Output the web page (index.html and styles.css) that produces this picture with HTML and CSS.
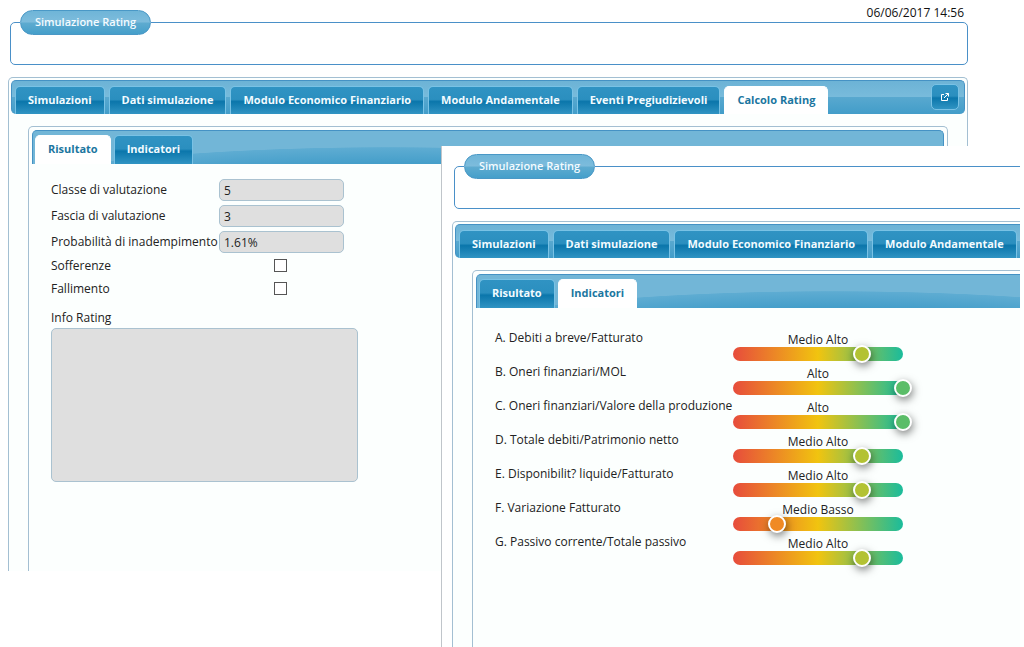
FILE: index.html
```html
<!DOCTYPE html>
<html lang="it">
<head>
<meta charset="utf-8">
<title>Simulazione Rating</title>
<link rel="stylesheet" href="styles.css">
</head>
<body>
<main class="app">
  <time class="clock" datetime="2017-06-06T14:56">06/06/2017 14:56</time>
  <fieldset class="group"><legend>Simulazione Rating</legend></fieldset>
  <section class="tabs">
    <nav class="bar">
      <button class="tab">Simulazioni</button>
      <button class="tab">Dati simulazione</button>
      <button class="tab">Modulo Economico Finanziario</button>
      <button class="tab">Modulo Andamentale</button>
      <button class="tab">Eventi Pregiudizievoli</button>
      <button class="tab active">Calcolo Rating</button>
      <button class="popout" aria-label="Apri in una nuova finestra">
        <svg width="10" height="10" viewBox="0 0 10 10" fill="none" stroke="currentColor"><path d="M4 2.500H1.500v6h6V6M5.500 1.500h3v3M8.500 1.500L4 6"/></svg>
      </button>
    </nav>
    <section class="tabs inner">
      <nav class="bar wave">
        <button class="tab active">Risultato</button>
        <button class="tab">Indicatori</button>
      </nav>
      <form class="result">
        <div class="fields">
          <label for="classe">Classe di valutazione</label><input id="classe" type="text" value="5" readonly>
          <label for="fascia">Fascia di valutazione</label><input id="fascia" type="text" value="3" readonly>
          <label for="prob">Probabilità di inadempimento</label><input id="prob" type="text" value="1.61%" readonly>
        </div>
        <div class="fields checks">
          <label for="soff">Sofferenze</label><input id="soff" type="checkbox">
          <label for="fall">Fallimento</label><input id="fall" type="checkbox">
        </div>
        <label class="info-label" for="info">Info Rating</label>
        <textarea id="info" readonly></textarea>
      </form>
    </section>
  </section>
</main>

<aside class="window">
  <div class="app">
    <fieldset class="group"><legend>Simulazione Rating</legend></fieldset>
    <section class="tabs">
      <nav class="bar">
        <button class="tab">Simulazioni</button>
        <button class="tab">Dati simulazione</button>
        <button class="tab">Modulo Economico Finanziario</button>
        <button class="tab">Modulo Andamentale</button>
        <button class="tab" aria-label="Scheda successiva"></button>
      </nav>
      <section class="tabs inner">
        <nav class="bar wave">
          <button class="tab">Risultato</button>
          <button class="tab active">Indicatori</button>
        </nav>
        <div class="gauges">
          <div class="gauge"><label for="g1">A. Debiti a breve/Fatturato</label><div class="meter"><output for="g1">Medio Alto</output><div class="track"><input id="g1" class="mid-high" type="range" value="76"></div></div></div>
          <div class="gauge"><label for="g2">B. Oneri finanziari/MOL</label><div class="meter"><output for="g2">Alto</output><div class="track"><input id="g2" class="high" type="range" value="100"></div></div></div>
          <div class="gauge"><label for="g3">C. Oneri finanziari/Valore della produzione</label><div class="meter"><output for="g3">Alto</output><div class="track"><input id="g3" class="high" type="range" value="100"></div></div></div>
          <div class="gauge"><label for="g4">D. Totale debiti/Patrimonio netto</label><div class="meter"><output for="g4">Medio Alto</output><div class="track"><input id="g4" class="mid-high" type="range" value="76"></div></div></div>
          <div class="gauge"><label for="g5">E. Disponibilit? liquide/Fatturato</label><div class="meter"><output for="g5">Medio Alto</output><div class="track"><input id="g5" class="mid-high" type="range" value="76"></div></div></div>
          <div class="gauge"><label for="g6">F. Variazione Fatturato</label><div class="meter"><output for="g6">Medio Basso</output><div class="track"><input id="g6" class="mid-low" type="range" value="26"></div></div></div>
          <div class="gauge"><label for="g7">G. Passivo corrente/Totale passivo</label><div class="meter"><output for="g7">Medio Alto</output><div class="track"><input id="g7" class="mid-high" type="range" value="76"></div></div></div>
        </div>
      </section>
    </section>
  </div>
</aside>
</body>
</html>
```

FILE: styles.css
```css
* { box-sizing: border-box; }

body {
  margin: 0;
  min-height: 100vh;
  position: relative;
  overflow: hidden;
  background: #fff;
  color: #222;
  font: 12px/14px "Trebuchet MS", "Open Sans", sans-serif;
}

button, input, textarea { font: inherit; color: inherit; }

.app { position: relative; padding: 10px 56px 0 8px; }

.clock {
  position: absolute;
  top: 6px;
  right: 60px;
  color: #111;
}

.group {
  margin: 0 0 12px 2px;
  padding: 0 9px;
  min-width: 0;
  height: 55px;
  border: 1px solid #4a90c8;
  border-radius: 5px;
}

.group legend {
  height: 25px;
  padding: 0 14px;
  border: 1px solid #4a98c6;
  border-radius: 13px;
  background: linear-gradient(#6fb5d8, #7dbcdc 48%, #5eabd0 52%, #459fca);
  color: #f4fbff;
  font-size: 11px;
  font-weight: 600;
  line-height: 22px;
}

.tabs {
  padding: 2px 2px 0;
  border: 1px solid #a3bfd2;
  border-bottom: 0;
  border-radius: 5px 5px 0 0;
  background: #fcfffe;
}

.tabs.inner { margin: 12px 17px 0; padding: 3px 3px 0; }

.bar {
  display: flex;
  align-items: flex-end;
  gap: 4px;
  height: 34px;
  padding: 0 5px 0 3px;
  border: 1px solid #4592c4;
  border-bottom: 0;
  border-radius: 5px;
  background: linear-gradient(#6cb3d6, #78bbdb 47%, #58a8cf 50%, #429dc9);
}

.inner .bar {
  gap: 3px;
  padding-left: 2px;
  border-radius: 5px 5px 0 0;
}

.bar.wave {
  background:
    radial-gradient(436px 60px at 355px 76px, #429dc9 70%, #5eacd2 99%, transparent 100%) 0 0 / 700px 100%,
    #72b6d7;
}

.tab {
  flex: none;
  height: 28px;
  min-width: 10px;
  padding: 0 12px 2px;
  border: 1px solid #79c2e5;
  border-bottom: 0;
  border-radius: 5px 5px 0 0;
  background: linear-gradient(#3093c3, #2b8fbf 46%, #0b76ab 54%, #3094c3);
  color: #f2fbff;
  font-size: 11px;
  font-weight: 700;
  line-height: 24px;
  white-space: nowrap;
}

.tab.active {
  border-color: #fff;
  background: #fff;
  color: #1b769f;
}

.inner .tab { height: 29px; }

.popout {
  display: grid;
  place-items: center;
  width: 28px;
  height: 26px;
  margin: 0 0 4px auto;
  padding: 0;
  border: 1px solid #79c2e5;
  border-radius: 5px;
  background: linear-gradient(#3093c3, #2b8fbf 46%, #0b76ab 54%, #3094c3);
  color: #fff;
}

.result { padding: 15px 19px 89px; }

.fields {
  display: grid;
  grid-template-columns: 168px 125px;
  row-gap: 4px;
  align-items: center;
}

.fields label { white-space: nowrap; }

.fields input[type="text"] {
  width: 100%;
  height: 22px;
  padding: 0 4px;
  border: 1px solid #aac2d0;
  border-radius: 5px;
  background: #dfdfdf;
  outline: 0;
}

.checks {
  grid-template-columns: 165px 128px;
  grid-auto-rows: 23px;
  row-gap: 0;
  margin-top: 1px;
}

.checks input {
  appearance: none;
  justify-self: center;
  width: 13px;
  height: 13px;
  margin: 0;
  border: 1px solid #555;
  background: #fff;
}

.info-label { display: block; margin: 11px 0 3px; }

.result textarea {
  display: block;
  width: 307px;
  height: 154px;
  border: 1px solid #aac2d0;
  border-radius: 5px;
  background: #dfdfdf;
  resize: none;
  outline: 0;
}

.window {
  position: absolute;
  inset: 146px 4px 0 441px;
  overflow: hidden;
  border-left: 1px solid #c0c5ca;
  background: #fff;
}

.window .app {
  width: 200%;
  padding: 8px 0 0 10px;
}

.gauges {
  display: grid;
  gap: 6px;
  padding: 25px 19px 120px;
}

.gauge {
  display: grid;
  grid-template-columns: 238px 170px;
  align-items: start;
}

.gauge label { line-height: 10px; white-space: nowrap; }

.meter output { display: block; text-align: center; }

.track {
  height: 14px;
  border-radius: 7px;
  background: linear-gradient(90deg, #e74c3c, #f1c40f 50%, #1abc9c);
}

.track input {
  appearance: none;
  display: block;
  width: 188px;
  height: 14px;
  margin: 0 -9px;
  background: none;
}

.track input::-webkit-slider-thumb {
  appearance: none;
  width: 18px;
  height: 18px;
  border: 2px solid #fff;
  border-radius: 50%;
  background: var(--level);
  box-shadow: 1px 3px 8px rgba(0, 0, 0, .5);
}

.mid-low { --level: #f08a24; }
.mid-high { --level: #b3c233; }
.high { --level: #5bbd68; }
```
